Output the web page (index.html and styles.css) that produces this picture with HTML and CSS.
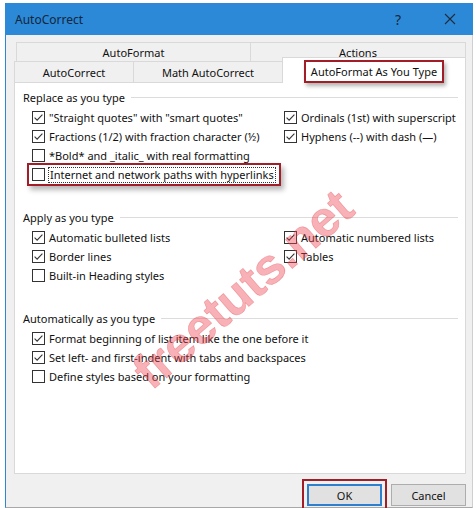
FILE: index.html
```html
<!DOCTYPE html>
<html lang="en">
<head>
<meta charset="utf-8">
<title>AutoCorrect</title>
<link rel="stylesheet" href="styles.css">
</head>
<body>
<div class="window">
  <div class="titlebar">
    <span class="title">AutoCorrect</span>
    <span class="help">?</span>
    <span class="close"><svg width="12" height="12" viewBox="0 0 12 12"><path d="M1 1L11 11M11 1L1 11" stroke="#1c2c3c" stroke-width="1.1" fill="none"/></svg></span>
  </div>
  <div class="body">
    <div class="tabs">
      <div class="tabrow back">
        <div class="tab t-af">AutoFormat</div>
        <div class="tab t-actions">Actions</div>
      </div>
      <div class="tabrow front">
        <div class="tab t-ac">AutoCorrect</div>
        <div class="tab t-math">Math AutoCorrect</div>
        <div class="tab active"><span class="mark">AutoFormat As You Type</span></div>
      </div>
    </div>
    <div class="panel">
      <section class="group">
        <div class="ghead">Replace as you type</div>
        <div class="grid">
          <label class="item"><svg class="cb" viewBox="0 0 13 13"><rect x="0.5" y="0.5" width="12" height="12" fill="#fff" stroke="#333"/><path d="M2.6 6.6L5.1 9.1L10.4 3.6" fill="none" stroke="#333" stroke-width="1.1"/></svg><span>&quot;Straight quotes&quot; with &quot;smart quotes&quot;</span></label>
          <label class="item"><svg class="cb" viewBox="0 0 13 13"><rect x="0.5" y="0.5" width="12" height="12" fill="#fff" stroke="#333"/><path d="M2.6 6.6L5.1 9.1L10.4 3.6" fill="none" stroke="#333" stroke-width="1.1"/></svg><span>Ordinals (1st) with superscript</span></label>
          <label class="item"><svg class="cb" viewBox="0 0 13 13"><rect x="0.5" y="0.5" width="12" height="12" fill="#fff" stroke="#333"/><path d="M2.6 6.6L5.1 9.1L10.4 3.6" fill="none" stroke="#333" stroke-width="1.1"/></svg><span>Fractions (1/2) with fraction character (½)</span></label>
          <label class="item"><svg class="cb" viewBox="0 0 13 13"><rect x="0.5" y="0.5" width="12" height="12" fill="#fff" stroke="#333"/><path d="M2.6 6.6L5.1 9.1L10.4 3.6" fill="none" stroke="#333" stroke-width="1.1"/></svg><span>Hyphens (--) with dash (—)</span></label>
          <label class="item"><svg class="cb" viewBox="0 0 13 13"><rect x="0.5" y="0.5" width="12" height="12" fill="#fff" stroke="#333"/></svg><span>*Bold* and _italic_ with real formatting</span></label>
          <div></div>
          <div class="cell"><label class="item focus"><svg class="cb" viewBox="0 0 13 13"><rect x="0.5" y="0.5" width="12" height="12" fill="#fff" stroke="#333"/></svg><span class="ftext">Internet and network paths with hyperlinks</span></label></div>
          <div></div>
        </div>
      </section>
      <section class="group">
        <div class="ghead">Apply as you type</div>
        <div class="grid">
          <label class="item"><svg class="cb" viewBox="0 0 13 13"><rect x="0.5" y="0.5" width="12" height="12" fill="#fff" stroke="#333"/><path d="M2.6 6.6L5.1 9.1L10.4 3.6" fill="none" stroke="#333" stroke-width="1.1"/></svg><span>Automatic bulleted lists</span></label>
          <label class="item"><svg class="cb" viewBox="0 0 13 13"><rect x="0.5" y="0.5" width="12" height="12" fill="#fff" stroke="#333"/><path d="M2.6 6.6L5.1 9.1L10.4 3.6" fill="none" stroke="#333" stroke-width="1.1"/></svg><span>Automatic numbered lists</span></label>
          <label class="item"><svg class="cb" viewBox="0 0 13 13"><rect x="0.5" y="0.5" width="12" height="12" fill="#fff" stroke="#333"/><path d="M2.6 6.6L5.1 9.1L10.4 3.6" fill="none" stroke="#333" stroke-width="1.1"/></svg><span>Border lines</span></label>
          <label class="item"><svg class="cb" viewBox="0 0 13 13"><rect x="0.5" y="0.5" width="12" height="12" fill="#fff" stroke="#333"/><path d="M2.6 6.6L5.1 9.1L10.4 3.6" fill="none" stroke="#333" stroke-width="1.1"/></svg><span>Tables</span></label>
          <label class="item"><svg class="cb" viewBox="0 0 13 13"><rect x="0.5" y="0.5" width="12" height="12" fill="#fff" stroke="#333"/></svg><span>Built-in Heading styles</span></label>
          <div></div>
        </div>
      </section>
      <section class="group">
        <div class="ghead">Automatically as you type</div>
        <div class="list">
          <label class="item"><svg class="cb" viewBox="0 0 13 13"><rect x="0.5" y="0.5" width="12" height="12" fill="#fff" stroke="#333"/><path d="M2.6 6.6L5.1 9.1L10.4 3.6" fill="none" stroke="#333" stroke-width="1.1"/></svg><span>Format beginning of list item like the one before it</span></label>
          <label class="item"><svg class="cb" viewBox="0 0 13 13"><rect x="0.5" y="0.5" width="12" height="12" fill="#fff" stroke="#333"/><path d="M2.6 6.6L5.1 9.1L10.4 3.6" fill="none" stroke="#333" stroke-width="1.1"/></svg><span>Set left- and first-indent with tabs and backspaces</span></label>
          <label class="item"><svg class="cb" viewBox="0 0 13 13"><rect x="0.5" y="0.5" width="12" height="12" fill="#fff" stroke="#333"/></svg><span>Define styles based on your formatting</span></label>
        </div>
      </section>
      <div class="watermark">freetuts.net</div>
    </div>
    <div class="buttons">
      <button class="btn ok">OK</button>
      <button class="btn">Cancel</button>
    </div>
  </div>
</div>
</body>
</html>
```
FILE: styles.css
```css
* { box-sizing: border-box; }
html, body { margin: 0; padding: 0; background: #ffffff; }
body {
  font-family: "Noto Sans", "Open Sans", sans-serif;
  font-size: 11px;
  color: #111;
}
.window {
  width: 468px;
  height: 505px;
  margin: 3px 3px 0 5px;
  display: flex;
  flex-direction: column;
}
.titlebar {
  height: 32px;
  background: #2b89d7;
  display: flex;
  align-items: center;
  padding-left: 10px;
  color: #14263a;
  flex: none;
}
.title { font-size: 12px; flex: 1; }
.help { font-size: 14px; width: 12px; margin-right: 37px; }
.close { width: 12px; height: 12px; margin-right: 17px; display: flex; }
.body {
  flex: 1;
  background: #f0f0f0;
  border-left: 1px solid #2b86d4;
  border-right: 1px solid #cfcfcf;
  border-bottom: 1px solid #a8a8a8;
  padding: 7px 0 1px 8px;
}
.tabrow { display: flex; }
.tab {
  border: 1px solid #d9d9d9;
  border-bottom: none;
  display: flex;
  align-items: center;
  justify-content: center;
  white-space: nowrap;
}
.back { margin-left: 2px; height: 19px; }
.back .tab { height: 19px; }
.t-af { width: 235px; }
.t-actions { width: 216px; margin-left: -1px; }
.front { height: 21px; align-items: flex-end; }
.front .tab { height: 21px; }
.t-ac { width: 120px; }
.t-math { width: 150px; margin-left: -1px; }
.front .tab.active {
  width: 184px;
  height: 26px;
  margin-left: -1px;
  margin-bottom: -1px;
  background: #fff;
  position: relative;
  z-index: 2;
  align-items: flex-start;
  padding-top: 2px;
}
.mark {
  display: inline-block;
  height: 23px;
  line-height: 19px;
  padding: 0 5px;
  border: 2px solid #a11d28;
  box-shadow: 2px 3px 4px rgba(0,0,0,0.3);
}
.panel {
  width: 452px;
  height: 392px;
  background: #fff;
  border: 1px solid #d9d9d9;
  padding: 4px 7px 0 8px;
  position: relative;
}
.group { margin-bottom: 23px; }
.ghead {
  height: 21px;
  display: flex;
  align-items: center;
  white-space: nowrap;
}
.ghead::after {
  content: "";
  flex: 1;
  border-top: 1px solid #dcdcdc;
  margin-left: 6px;
}
.grid {
  display: grid;
  grid-template-columns: 252px 1fr;
  grid-auto-rows: 19px;
  padding-left: 9px;
}
.list {
  display: grid;
  grid-auto-rows: 19px;
  padding-left: 9px;
}
.item {
  display: flex;
  align-items: center;
  gap: 4px;
  white-space: nowrap;
}
.cb { width: 13px; height: 13px; flex: none; }
.cell { display: flex; align-items: center; }
.item.focus {
  height: 19px;
  gap: 3px;
  padding: 0 3px;
  margin-left: -3px;
  box-shadow: 0 0 0 2px #a11d28, 3px 4px 5px 2px rgba(0,0,0,0.28);
}
.ftext {
  border: 1px dotted #333;
  padding: 0 1px;
  line-height: 14px;
}
.watermark {
  position: absolute;
  left: 228px;
  top: 206px;
  transform: translate(-50%, -50%) rotate(-41deg);
  font-family: "Liberation Sans", Arial, sans-serif;
  font-weight: bold;
  font-size: 50px;
  color: rgba(238, 70, 80, 0.42);
  -webkit-text-stroke: 0.6px rgba(220, 40, 50, 0.35);
  white-space: nowrap;
  pointer-events: none;
  z-index: 3;
}
.buttons {
  display: flex;
  justify-content: flex-end;
  gap: 9px;
  margin-top: 10px;
  padding-right: 6px;
}
.btn {
  width: 75px;
  height: 22px;
  font-family: "Noto Sans", "Open Sans", sans-serif;
  font-size: 11px;
  color: #111;
  background: #e1e1e1;
  border: 1px solid #adadad;
  padding: 0;
}
.btn.ok {
  border: 2px solid #2e80cf;
  outline: 2px solid #a11d28;
  outline-offset: 3px;
}
```
